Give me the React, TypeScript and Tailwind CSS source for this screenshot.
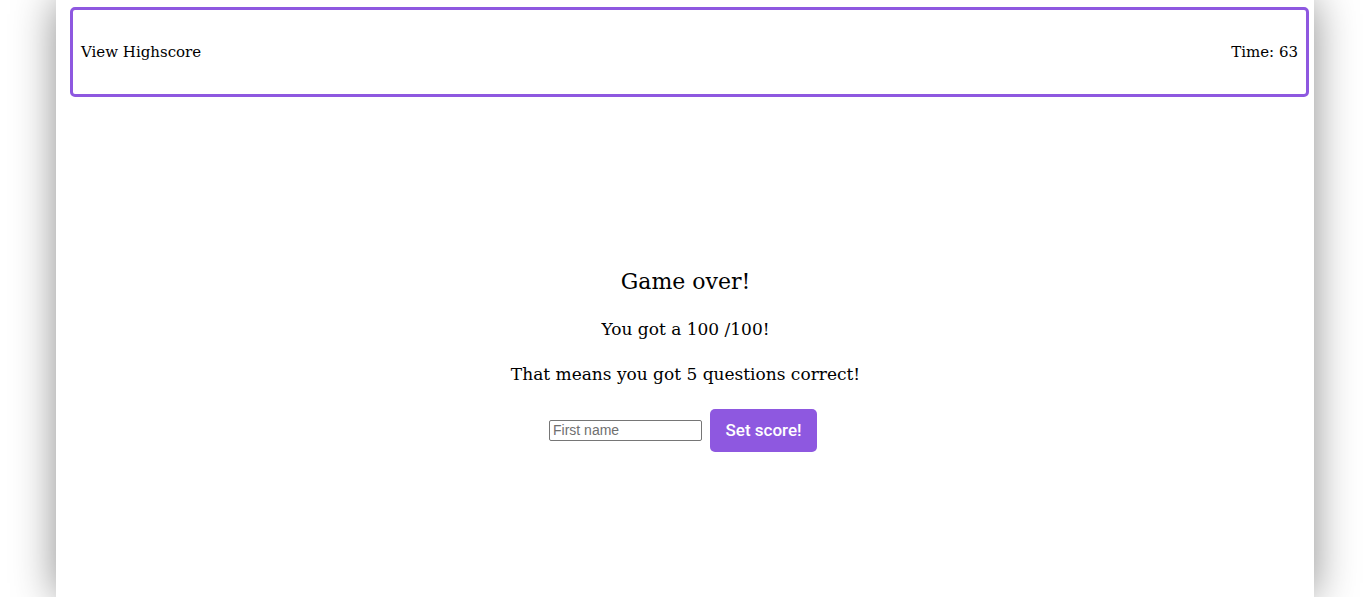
export default function App() {
  return (
    <div className="min-h-[597px] bg-white flex justify-center font-['DejaVu_Serif',serif] text-black">
      {/* page card */}
      <div className="w-[1258px] min-h-[597px] bg-white shadow-[0_0_40px_rgba(0,0,0,0.45)] pl-[14px] pr-[5px] pt-[7px]">
        {/* header */}
        <header className="h-[90px] border-[3px] border-[#8e58e0] rounded-[5px] flex items-center justify-between px-[8px] text-[15px]">
          <span>View Highscore</span>
          <span>Time: 63</span>
        </header>

        {/* result */}
        <div className="flex flex-col items-center mt-[170px] pr-[8px]">
          <h1 className="text-[22px] leading-[30px]">Game over!</h1>
          <p className="text-[17px] leading-[24px] mt-[20px]">You got a 100 /100!</p>
          <p className="text-[17px] leading-[24px] mt-[21px]">That means you got 5 questions correct!</p>
          <div className="flex items-center gap-[8px] mt-[23px] mr-[5px]">
            <input
              type="text"
              placeholder="First name"
              className="w-[153px] h-[21px] border border-[#767676] rounded-[2px] px-[3px] text-[14px] font-['Liberation_Sans',sans-serif] placeholder:text-[#6f6f6f]"
            />
            <button className="w-[107px] h-[43px] bg-[#8e58e0] text-white rounded-[5px] text-[17px] font-medium font-['Roboto',sans-serif]">
              Set score!
            </button>
          </div>
        </div>
      </div>
    </div>
  );
}
